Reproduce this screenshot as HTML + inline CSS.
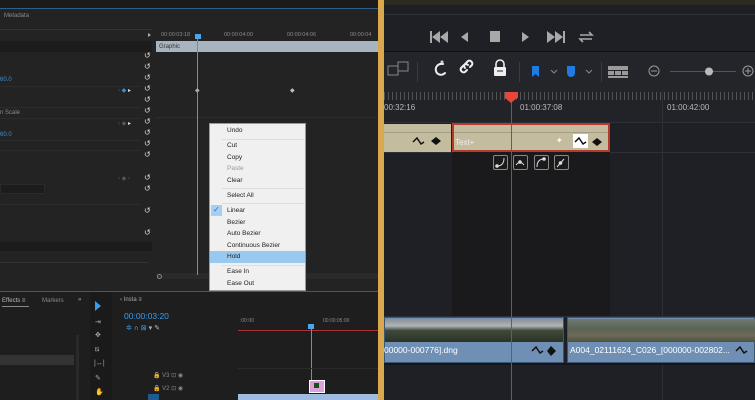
<!DOCTYPE html>
<html><head><meta charset="utf-8"><style>
*{margin:0;padding:0;box-sizing:border-box}
body{width:755px;height:400px;overflow:hidden;background:#1f2026;font-family:"Liberation Sans",sans-serif;position:relative}
.a{position:absolute}
.t{position:absolute;font-size:6px;color:#8a8a8a;white-space:nowrap}
.m{position:absolute;left:227px;font-size:6.5px;color:#222;white-space:nowrap}
.r{position:absolute;left:144px;font-size:8px;color:#ddd}
.w{position:absolute;font-size:8px;color:#bbb}
.kf{position:absolute;width:15px;height:15px;border:1px solid #888;border-radius:2px;background:#1a1a1a;top:155px}
</style></head><body>
<!-- LEFT Premiere -->
<div class="a" style="left:0;top:0;width:378px;height:400px;background:#232323"></div>
<div class="a" style="left:0;top:0;width:378px;height:8px;background:#1b1b1b"></div>
<div class="a" style="left:0;top:8px;width:378px;height:1px;background:#2d5f8c"></div>
<div class="t" style="left:4px;top:13px">Metadata</div>
<div class="a" style="left:0;top:29px;width:152px;height:1px;background:#333"></div>
<div class="a" style="left:0;top:41px;width:152px;height:11px;background:#1c1c1c"></div>
<div class="a" style="left:148px;top:33px;width:0;height:0;border-left:3px solid #aaa;border-top:2px solid transparent;border-bottom:2px solid transparent"></div>
<div class="a" style="left:0;top:86px;width:140px;height:1px;background:#2c2c2c"></div>
<div class="a" style="left:0;top:107px;width:140px;height:1px;background:#2c2c2c"></div>
<div class="a" style="left:0;top:118px;width:140px;height:1px;background:#2c2c2c"></div>
<div class="a" style="left:0;top:140px;width:140px;height:1px;background:#2c2c2c"></div>
<div class="a" style="left:0;top:150px;width:140px;height:1px;background:#2c2c2c"></div>
<div class="a" style="left:0;top:184px;width:45px;height:10px;background:#1c1c1c;border:1px solid #2a2a2a"></div>
<div class="a" style="left:0;top:204px;width:140px;height:1px;background:#2c2c2c"></div>
<div class="a" style="left:0;top:242px;width:152px;height:9px;background:#1b1b1b"></div>
<div class="a" style="left:0;top:262px;width:148px;height:1px;background:#333"></div>
<div class="t" style="left:0;top:77px;color:#3b8ed8">60.0</div>
<div class="t" style="left:0;top:132px;color:#3b8ed8">60.0</div>
<div class="t" style="left:0;top:110px">n Scale</div>
<div class="t" style="left:118px;top:87px;color:#555">‹ <span style="color:#3b8ed8">◆</span> <span style="color:#ddd">▸</span></div>
<div class="t" style="left:118px;top:120px;color:#555">‹ ◆ <span style="color:#ddd">▸</span></div>
<div class="t" style="left:118px;top:175px;color:#555">‹ ◆ ›</div>
<div class="r" style="top:51px">↺</div><div class="r" style="top:62px">↺</div><div class="r" style="top:73px">↺</div><div class="r" style="top:84px">↺</div><div class="r" style="top:95px">↺</div><div class="r" style="top:106px">↺</div><div class="r" style="top:117px">↺</div><div class="r" style="top:128px">↺</div><div class="r" style="top:139px">↺</div><div class="r" style="top:150px">↺</div><div class="r" style="top:173px">↺</div><div class="r" style="top:184px">↺</div><div class="r" style="top:206px">↺</div><div class="r" style="top:228px">↺</div>
<div class="t" style="left:161px;top:32px;font-size:5.5px">00:00:03:18</div>
<div class="t" style="left:224px;top:32px;font-size:5.5px">00:00:04:00</div>
<div class="t" style="left:287px;top:32px;font-size:5.5px">00:00:04:06</div>
<div class="t" style="left:350px;top:32px;font-size:5.5px">00:00:04</div>
<div class="a" style="left:156px;top:41px;width:222px;height:11px;background:#a8b4bf"></div>
<div class="t" style="left:159px;top:44px;color:#333">Graphic</div>
<div class="a" style="left:156px;top:117px;width:222px;height:1px;background:#2c2c2c"></div>
<div class="a" style="left:156px;top:273px;width:222px;height:6px;background:#2a2a2a"></div>
<div class="a" style="left:157px;top:274px;width:5px;height:5px;border:1px solid #888;border-radius:50%"></div>
<div class="a" style="left:197px;top:35px;width:1px;height:240px;background:#4a9ad8"></div>
<div class="a" style="left:195px;top:34px;width:6px;height:5px;background:#4aa6f0"></div>
<div class="t" style="left:195px;top:87px;color:#aaa">◆</div>
<div class="t" style="left:290px;top:87px;color:#bbb">◆</div>
<div class="a" style="left:209px;top:123px;width:97px;height:168px;background:#f0f0f0;border:1px solid #999"></div>
<div class="a" style="left:210px;top:251px;width:95px;height:12px;background:#99c9ef"></div>
<div class="a" style="left:211px;top:205px;width:11px;height:11px;background:#a6d0f2"></div>
<div class="a" style="left:213px;top:205px;font-size:8px;color:#2a6fb8">✓</div>
<div class="a" style="left:222px;top:139px;width:82px;height:1px;background:#ddd"></div>
<div class="a" style="left:222px;top:188px;width:82px;height:1px;background:#ddd"></div>
<div class="a" style="left:222px;top:203px;width:82px;height:1px;background:#ddd"></div>
<div class="a" style="left:222px;top:265px;width:82px;height:1px;background:#ddd"></div>
<div class="m" style="top:127px">Undo</div>
<div class="m" style="top:142px">Cut</div>
<div class="m" style="top:154px">Copy</div>
<div class="m" style="top:165px;color:#999">Paste</div>
<div class="m" style="top:177px">Clear</div>
<div class="m" style="top:192px">Select All</div>
<div class="m" style="top:207px">Linear</div>
<div class="m" style="top:219px">Bezier</div>
<div class="m" style="top:230px">Auto Bezier</div>
<div class="m" style="top:242px">Continuous Bezier</div>
<div class="m" style="top:253px">Hold</div>
<div class="m" style="top:268px">Ease In</div>
<div class="m" style="top:280px">Ease Out</div>
<div class="a" style="left:0;top:291px;width:378px;height:1px;background:#2d5f8c"></div>
<div class="a" style="left:0;top:292px;width:378px;height:108px;background:#1e1e1e"></div>
<div class="t" style="left:2px;top:298px;color:#bbb">Effects ≡</div>
<div class="a" style="left:2px;top:306px;width:27px;height:1px;background:#888"></div>
<div class="t" style="left:42px;top:298px">Markers</div>
<div class="t" style="left:78px;top:297px;color:#aaa">»</div>
<div class="a" style="left:0;top:355px;width:74px;height:10px;background:#333"></div>
<div class="a" style="left:76px;top:335px;width:3px;height:65px;background:#2a2a2a"></div>
<div class="a" style="left:90px;top:292px;width:22px;height:108px;background:#1a1a1a"></div>
<div class="a" style="left:95px;top:301px;width:0;height:0;border-left:6px solid #3b9be8;border-top:5px solid transparent;border-bottom:5px solid transparent"></div>
<div class="t" style="left:95px;top:318px;color:#aaa;font-size:7px">⇥</div>
<div class="t" style="left:95px;top:331px;color:#aaa;font-size:7px">✥</div>
<div class="t" style="left:95px;top:346px;color:#aaa;font-size:7px">⧅</div>
<div class="t" style="left:94px;top:360px;color:#aaa;font-size:7px">|↔|</div>
<div class="t" style="left:95px;top:374px;color:#aaa;font-size:7px">✎</div>
<div class="t" style="left:95px;top:388px;color:#aaa;font-size:7px">✋</div>
<div class="t" style="left:120px;top:297px;color:#aaa">‹ Insta ≡</div>
<div class="a" style="left:124px;top:311px;font-size:8.5px;color:#3b9be8">00:00:03:20</div>
<div class="t" style="left:126px;top:324px;color:#3b9be8;font-size:7px">✲ <span style="color:#bbb">∩</span> ⊠ <span style="color:#bbb">▾ ✎</span></div>
<div class="t" style="left:240px;top:318px;font-size:5px">:00:00</div>
<div class="t" style="left:323px;top:318px;font-size:5px">00:00:05:00</div>
<div class="a" style="left:238px;top:330px;width:140px;height:1px;background:#a33"></div>
<div class="a" style="left:311px;top:325px;width:1px;height:55px;background:#4a9ad8"></div>
<div class="a" style="left:308px;top:324px;width:6px;height:5px;background:#4aa6f0"></div>
<div class="a" style="left:238px;top:368px;width:140px;height:1px;background:#2a2a2a"></div>
<div class="t" style="left:153px;top:372px;color:#888">🔒 V3 ⊡ ◉</div>
<div class="t" style="left:153px;top:385px;color:#888">🔒 V2 ⊡ ◉</div>
<div class="a" style="left:148px;top:394px;width:11px;height:6px;background:#1f5b8e"></div>
<div class="a" style="left:309px;top:380px;width:16px;height:13px;background:#dda0dd;border:1px solid #fff"></div>
<div class="a" style="left:314px;top:383px;width:5px;height:5px;background:#185018"></div>
<div class="a" style="left:238px;top:394px;width:140px;height:6px;background:#9fbbe0"></div>
<!-- divider -->
<div class="a" style="left:378px;top:0;width:6px;height:400px;background:#d9a84c"></div>
<!-- RIGHT Resolve -->
<div class="a" style="left:384px;top:0;width:371px;height:5px;background:#2c2a22"></div>
<div class="a" style="left:384px;top:14px;width:371px;height:1px;background:#33343a"></div>
<svg class="a" style="left:384px;top:25px" width="371" height="25" viewBox="0 0 371 25" fill="#a8a8a8" stroke="none">
 <rect x="46" y="6" width="2" height="12"/><path d="M56 6v12l-8-6zM64 6v12l-8-6z"/>
 <path d="M84 7v10l-7-5z"/>
 <rect x="106" y="6" width="10" height="11"/>
 <path d="M138 7v10l7-5z"/>
 <path d="M163 6v12l8-6zM171 6v12l8-6z"/><rect x="179" y="6" width="2" height="12"/>
 <g fill="none" stroke="#a8a8a8" stroke-width="1.6"><path d="M196 10h12l-3-3M208 14h-12l3 3"/><path d="M196 10v0M208 14v0"/></g>
</svg>
<div class="a" style="left:384px;top:51px;width:371px;height:1px;background:#111"></div>
<div class="a" style="left:384px;top:52px;width:371px;height:39px;background:#24252b"></div>
<svg class="a" style="left:384px;top:52px" width="371" height="39" viewBox="0 0 371 39">
 <g fill="none" stroke="#888" stroke-width="1"><rect x="4" y="14" width="10" height="9"/><rect x="14" y="10" width="10" height="9"/></g>
 <rect x="33" y="10" width="1" height="20" fill="#3a3a40"/>
 <g fill="none" stroke="#eee" stroke-width="2" stroke-linecap="round">
  <path d="M59 12c-5-1-8 3-7 7 1 4 6 5 9 2"/><circle cx="58" cy="10" r="0.5"/>
  <path d="M83 18l-2 2a3 3 0 0 1-4-4l3-3a3 3 0 0 1 4 0M86 15l2-2a3 3 0 0 0-4-4l-3 3a3 3 0 0 0 0 4"/>
 </g>
 <rect x="110" y="15" width="12" height="9" rx="1" fill="#eee"/><path d="M112 15v-3a4 4 0 0 1 8 0v3" fill="none" stroke="#eee" stroke-width="1.6"/><path d="M113 19h6" stroke="#24252b" stroke-width="1"/>
 <rect x="135" y="10" width="1" height="20" fill="#3a3a40"/>
 <path d="M148 14h7v11l-3.5-3-3.5 3z" fill="#1e7be0"/>
 <path d="M167 18l3 3 3-3M202 18l3 3 3-3" fill="none" stroke="#888" stroke-width="1"/>
 <path d="M183 14h8v7a4 4 0 0 1-8 0z" fill="#1e7be0"/>
 <rect x="217" y="10" width="1" height="20" fill="#3a3a40"/>
 <g fill="#9a9a9a"><rect x="304" y="14" width="20" height="4" transform="translate(-80 0)"/><rect x="224" y="19" width="6" height="4"/><rect x="231" y="19" width="6" height="4"/><rect x="238" y="19" width="6" height="4"/><rect x="224" y="24" width="20" height="2"/></g>
 <g fill="none" stroke="#999" stroke-width="1"><circle cx="270" cy="19" r="5"/><path d="M267 19h6"/><circle cx="364" cy="19" r="5"/><path d="M361 19h6M364 16v6"/></g>
 <rect x="286" y="19" width="66" height="1" fill="#555"/><circle cx="325" cy="19.5" r="4" fill="#bbb"/>
</svg>
<div class="a" style="left:384px;top:91px;width:371px;height:31px;background:#222328"></div>
<div class="a" style="left:384px;top:92px;width:371px;height:8px;background:repeating-linear-gradient(90deg,#555 0 1px,transparent 1px 4px)"></div>
<div class="w" style="left:384px;top:103px">00:32:16</div>
<div class="w" style="left:520px;top:103px">01:00:37:08</div>
<div class="w" style="left:667px;top:103px">01:00:42:00</div>
<div class="a" style="left:662px;top:91px;width:1px;height:309px;background:#2f3036"></div>
<div class="a" style="left:384px;top:122px;width:371px;height:1px;background:#2f3036"></div>
<div class="a" style="left:384px;top:152px;width:371px;height:1px;background:#2f3036"></div>
<div class="a" style="left:384px;top:316px;width:371px;height:1px;background:#2f3036"></div>
<div class="a" style="left:384px;top:124px;width:67px;height:28px;background:#c4bc9f"></div>
<div class="a" style="left:384px;top:132px;width:67px;height:1px;background:#a39d84"></div>
<svg class="a" style="left:412px;top:135px" width="36" height="12"><path d="M1 7l4-4 4 6 3-2" fill="none" stroke="#111" stroke-width="1.5"/><path d="M24 2l5 4-5 4-5-4z" fill="#111"/></svg>
<div class="a" style="left:452px;top:152px;width:158px;height:164px;background:#1a1a1c"></div>
<div class="a" style="left:452px;top:123px;width:158px;height:29px;background:#c4bc9f;border:2px solid #b7392c"></div>
<div class="a" style="left:454px;top:132px;width:154px;height:1px;background:#a39d84"></div>
<div class="a" style="left:455px;top:138px;font-size:8px;color:#eee">Text+</div>
<div class="a" style="left:556px;top:136px;font-size:8px;color:#fff">✦</div>
<div class="a" style="left:573px;top:134px;width:15px;height:14px;background:#fff"></div>
<svg class="a" style="left:574px;top:136px" width="36" height="12"><path d="M1 6l4-4 4 6 3-2" fill="none" stroke="#111" stroke-width="1.5"/><path d="M23 2l5 4-5 4-5-4z" fill="#111"/></svg>
<div class="kf" style="left:493px"></div><div class="kf" style="left:513px"></div><div class="kf" style="left:534px"></div><div class="kf" style="left:554px"></div>
<svg class="a" style="left:493px;top:155px" width="80" height="15" fill="none" stroke="#ddd" stroke-width="1"><path d="M4 11q7 0 7-8"/><circle cx="4" cy="11" r="1.3" fill="#ddd"/><path d="M23 10q4-5 8 0"/><circle cx="27" cy="7" r="1.3" fill="#ddd"/><path d="M44 12q0-8 7-8"/><circle cx="51" cy="4" r="1.3" fill="#ddd"/><path d="M64 12l7-8"/><circle cx="67.5" cy="8" r="1.3" fill="#ddd"/></svg>
<div class="a" style="left:384px;top:317px;width:180px;height:46px;background:#6f8fb4;border:1px solid #3a5675"></div>
<div class="a" style="left:385px;top:319px;width:178px;height:23px;background:linear-gradient(#8a9098 0,#b0b4b8 30%,#3f4a3a 50%,#2b3226 100%)"></div>
<div class="a" style="left:567px;top:317px;width:188px;height:46px;background:#6f8fb4;border:1px solid #3a5675"></div>
<div class="a" style="left:568px;top:319px;width:187px;height:23px;background:linear-gradient(#707a70,#5a6456 40%,#6d6a58 70%,#4c5440)"></div>
<div class="a" style="left:384px;top:345px;font-size:8.5px;color:#fff">00000-000776].dng</div>
<svg class="a" style="left:531px;top:345px" width="30" height="12"><path d="M1 6l4-4 4 6 3-2" fill="none" stroke="#111" stroke-width="1.5"/><path d="M20 1l5 5-5 5-4-5z" fill="#111"/></svg>
<div class="a" style="left:570px;top:345px;font-size:8.5px;color:#fff">A004_02111624_C026_[000000-002802...</div>
<svg class="a" style="left:735px;top:345px" width="20" height="12"><path d="M1 6l4-4 4 6 3-2" fill="none" stroke="#111" stroke-width="1.5"/></svg>
<div class="a" style="left:384px;top:363px;width:371px;height:2px;background:#15161a"></div>
<div class="a" style="left:511px;top:96px;width:1px;height:304px;background:#c0392b"></div>
<div class="a" style="left:505px;top:92px;width:13px;height:6px;background:#e5473b"></div>
<div class="a" style="left:505px;top:98px;width:0;height:0;border-left:6.5px solid transparent;border-right:6.5px solid transparent;border-top:5px solid #e5473b"></div>
</body></html>
